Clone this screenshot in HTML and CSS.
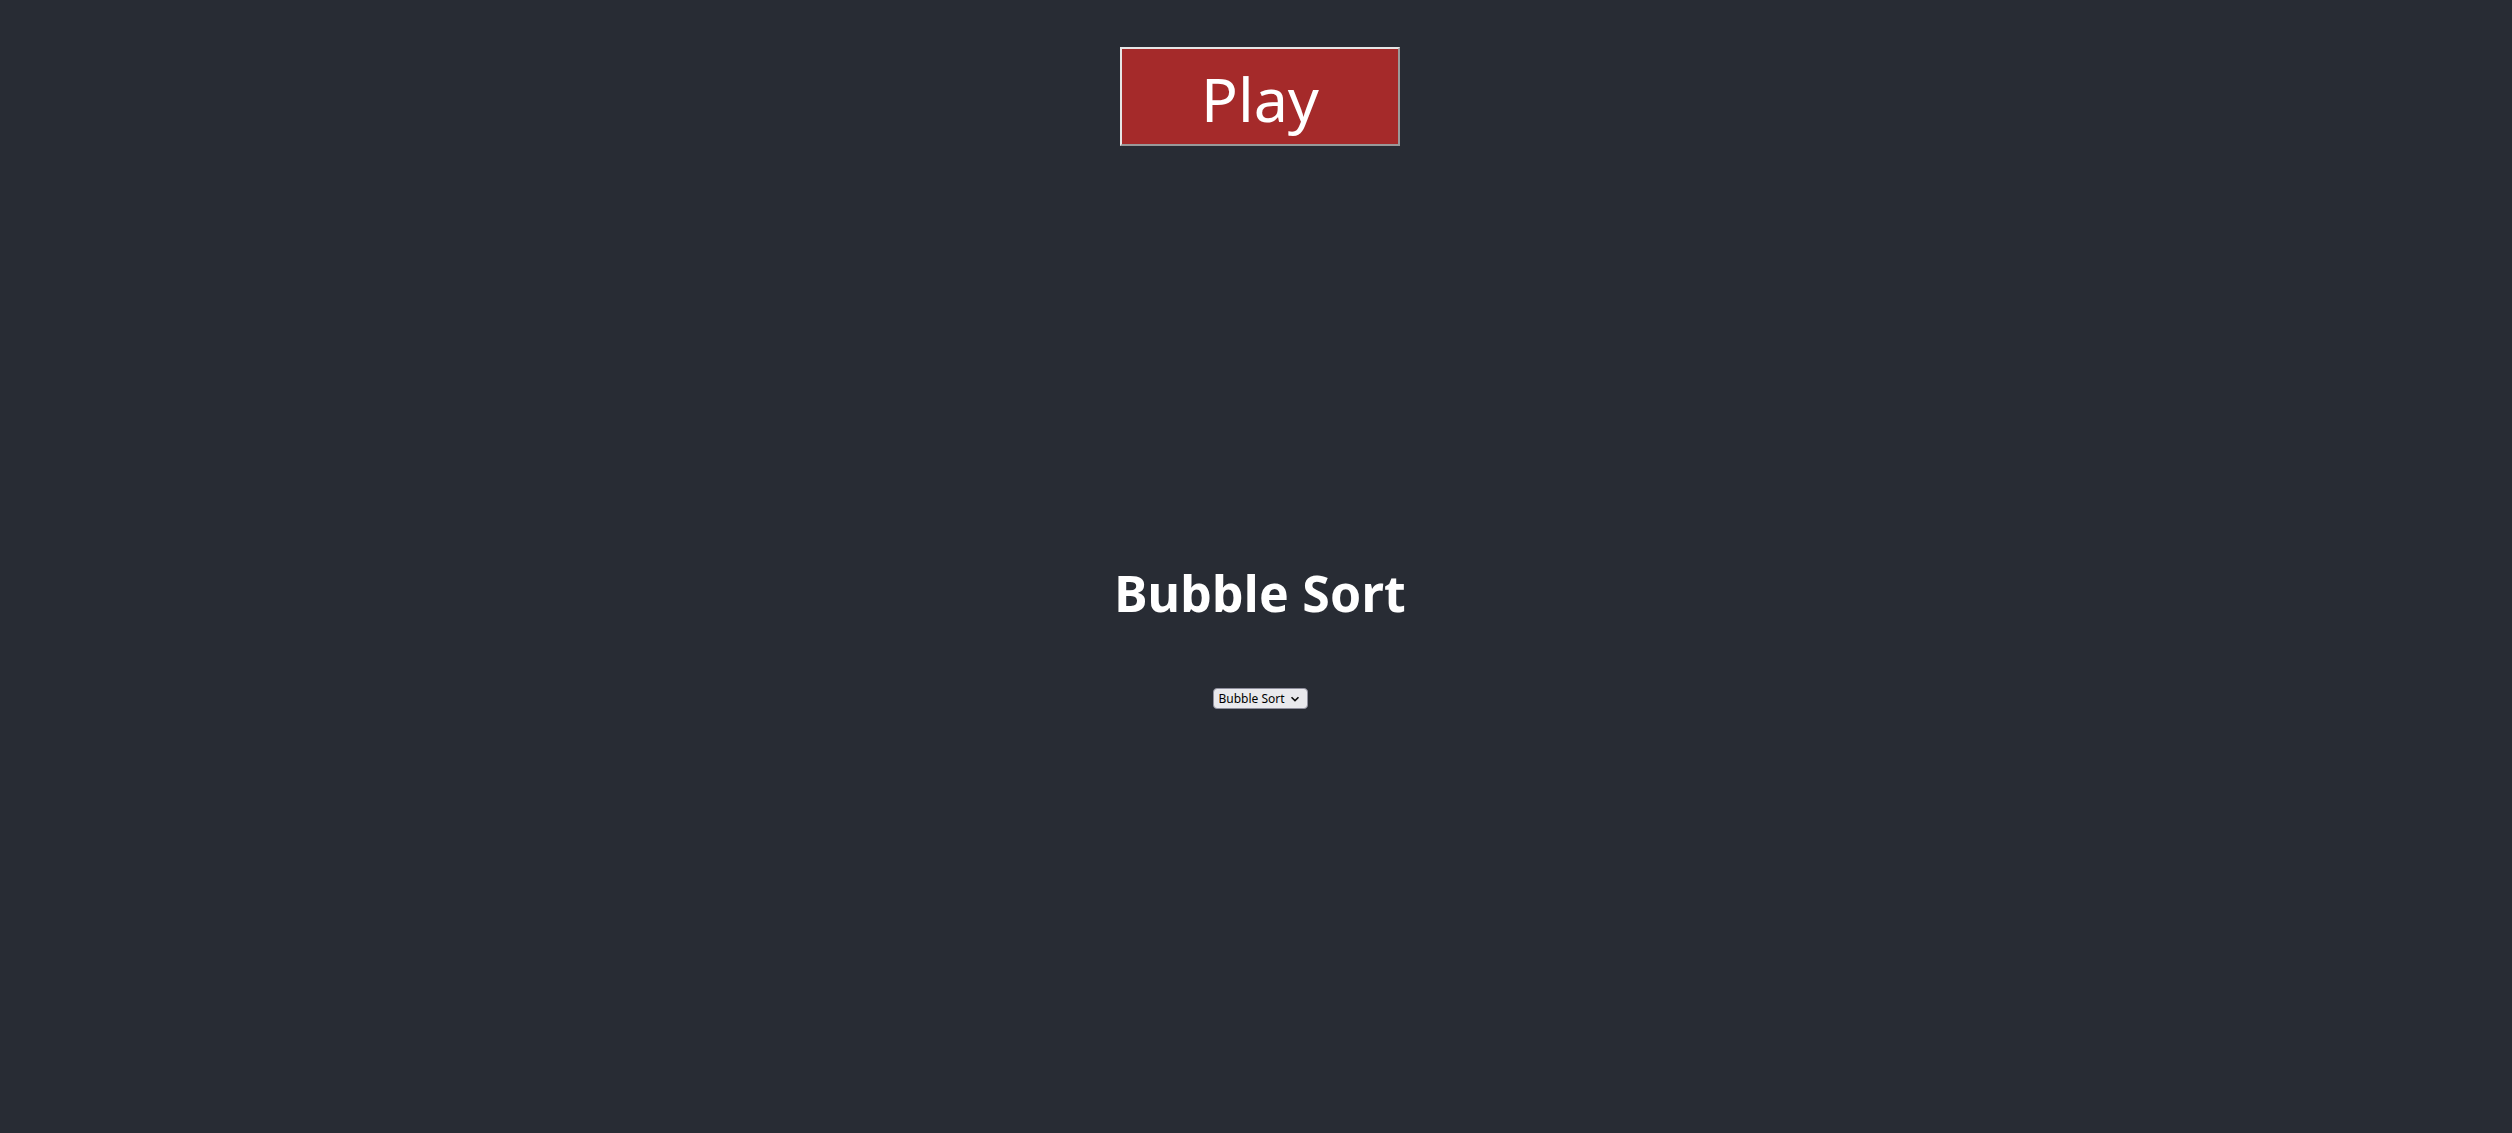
FILE: index.html
```html
<!DOCTYPE html>
<html>
<head>
<meta charset="utf-8">
<link rel="stylesheet" href="styles.css">
</head>
<body>
<div class="app">
  <button class="play">Play</button>
  <h1 class="title">Bubble Sort</h1>
  <select class="algo">
    <option>Bubble Sort</option>
  </select>
</div>
</body>
</html>
```
FILE: styles.css
```css
html, body {
  margin: 0;
  padding: 0;
  background: #282c34;
}
.app {
  display: flex;
  flex-direction: column;
  align-items: center;
  padding-left: 8px;
  font-family: "Noto Sans", "Open Sans", sans-serif;
}
.play {
  margin-top: 47px;
  width: 280px;
  height: 99px;
  background: #a52a2a;
  color: #fff;
  font-family: "Noto Sans", sans-serif;
  font-size: 61px;
  border: 2px solid;
  border-color: #e6e6e6 #999 #999 #e6e6e6;
  padding: 4px 0 0;
  line-height: 1;
}
.title {
  margin: 417px 0 0;
  color: #fff;
  font-size: 50px;
  font-weight: 700;
  line-height: 1.2;
  letter-spacing: 0.2px;
}
.algo {
  appearance: none;
  -webkit-appearance: none;
  margin-top: 65px;
  font-family: "Noto Sans", sans-serif;
  font-size: 12px;
  height: 21px;
  width: 95px;
  padding: 0 18px 0 5px;
  background-color: #e9e9ed;
  background-image: url("data:image/svg+xml;utf8,<svg xmlns='http://www.w3.org/2000/svg' width='10' height='6' viewBox='0 0 10 6'><path d='M1.5 1.2 L5 4.6 L8.5 1.2' fill='none' stroke='%23111' stroke-width='1.6'/></svg>");
  background-repeat: no-repeat;
  background-position: right 7px center;
  color: #000;
  border: 1px solid #8f8f9d;
  border-radius: 4px;
}
```
